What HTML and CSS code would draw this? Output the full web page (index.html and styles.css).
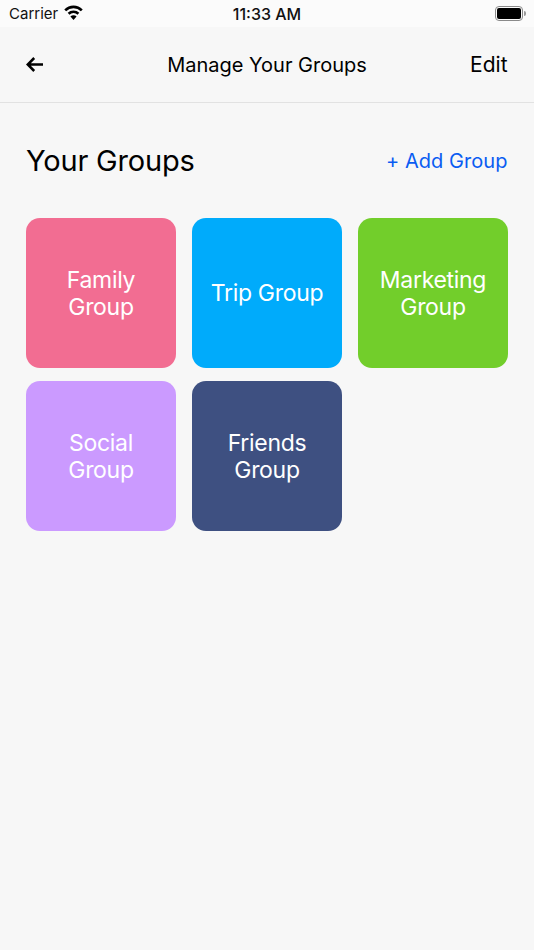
FILE: index.html
```html
<!DOCTYPE html>
<html lang="en">
<head>
<meta charset="utf-8">
<title>Manage Your Groups</title>
<link rel="stylesheet" href="styles.css">
</head>
<body>
<div class="status">
  <div class="status-left"><span>Carrier</span>
    <svg class="wifi" width="19" height="15" viewBox="0 0 19 15"><path d="M1.200 5.300a11.800 11.800 0 0 1 16.600 0M4.600 8.800a7 7 0 0 1 9.800 0" fill="none" stroke="#000" stroke-width="2.600"/><path d="M9.500 15 6.400 11.600a4.400 4.400 0 0 1 6.200 0z"/></svg>
  </div>
  <div class="status-time">11:33 AM</div>
  <div class="battery"><div class="battery-body"><div class="battery-fill"></div></div><div class="battery-cap"></div></div>
</div>
<header class="nav">
  <svg class="back" width="17" height="15" viewBox="0 0 17 15"><path d="M17 7.500H2.500M8.200 1 1.700 7.500 8.200 14" fill="none" stroke="#000" stroke-width="2.500"/></svg>
  <h1 class="nav-title">Manage Your Groups</h1>
  <span class="nav-edit">Edit</span>
</header>
<main class="content">
  <div class="head">
    <h2 class="head-title">Your Groups</h2>
    <span class="add">+ Add Group</span>
  </div>
  <div class="grid">
    <div class="tile pink">Family<br>Group</div>
    <div class="tile blue">Trip Group</div>
    <div class="tile green">Marketing<br>Group</div>
    <div class="tile purple">Social<br>Group</div>
    <div class="tile navy">Friends<br>Group</div>
  </div>
</main>
</body>
</html>
```
FILE: styles.css
```css
* { box-sizing: border-box; margin: 0; padding: 0; }
html, body { height: 100%; }
body {
  background: #f7f7f7;
  font-family: Inter, "Liberation Sans", sans-serif;
  color: #000;
  width: 534px;
  height: 950px;
  overflow: hidden;
}
.status {
  height: 27px;
  background: #fbfbfb;
  display: grid;
  grid-template-columns: 1fr auto 1fr;
  align-items: center;
  padding: 0 9px;
  font-size: 15px;
  color: #111;
}
.status-left { display: flex; align-items: center; gap: 6px; }
.wifi { margin-top: -2px; }
.status-time { font-weight: 500; font-size: 16px; }
.battery { justify-self: end; display: flex; align-items: center; margin-right: -1px; }
.battery-body {
  width: 28px; height: 15px; border: 1px solid #8a8a8a; border-radius: 4px; padding: 1px;
}
.battery-fill { width: 100%; height: 100%; background: #000; border-radius: 2px; }
.battery-cap { width: 2px; height: 5px; background: #999; border-radius: 0 2px 2px 0; margin-left: 1px; }
.nav {
  height: 76px;
  border-bottom: 1px solid #e2e2e2;
  display: grid;
  grid-template-columns: 1fr auto 1fr;
  align-items: center;
  padding: 0 26px;
}
.back { display: block; }
.nav-title { font-size: 20px; font-weight: 400; }
.nav-edit { justify-self: end; font-size: 21px; margin-right: 0.500px; }
.content { padding: 0 26px; }
.head {
  display: flex;
  justify-content: space-between;
  align-items: center;
  height: 115px;
}
.head-title { font-size: 29px; font-weight: 400; letter-spacing: -0.200px; }
.add { font-size: 20px; color: #0a5cf2; letter-spacing: 0.050px; margin-right: 0.500px; }
.grid {
  display: grid;
  grid-template-columns: repeat(3, 150px);
  grid-auto-rows: 150px;
  column-gap: 16px;
  row-gap: 13px;
}
.tile {
  border-radius: 14px;
  color: #fff;
  display: flex;
  align-items: center;
  justify-content: center;
  text-align: center;
  font-size: 23px;
  line-height: 27px;
  letter-spacing: -0.300px;
  padding-top: 1px;
}
.pink { background: #f26d92; }
.blue { background: #00abfb; }
.green { background: #72ce2b; }
.purple { background: #cb9aff; }
.navy { background: #3e5081; }
```
